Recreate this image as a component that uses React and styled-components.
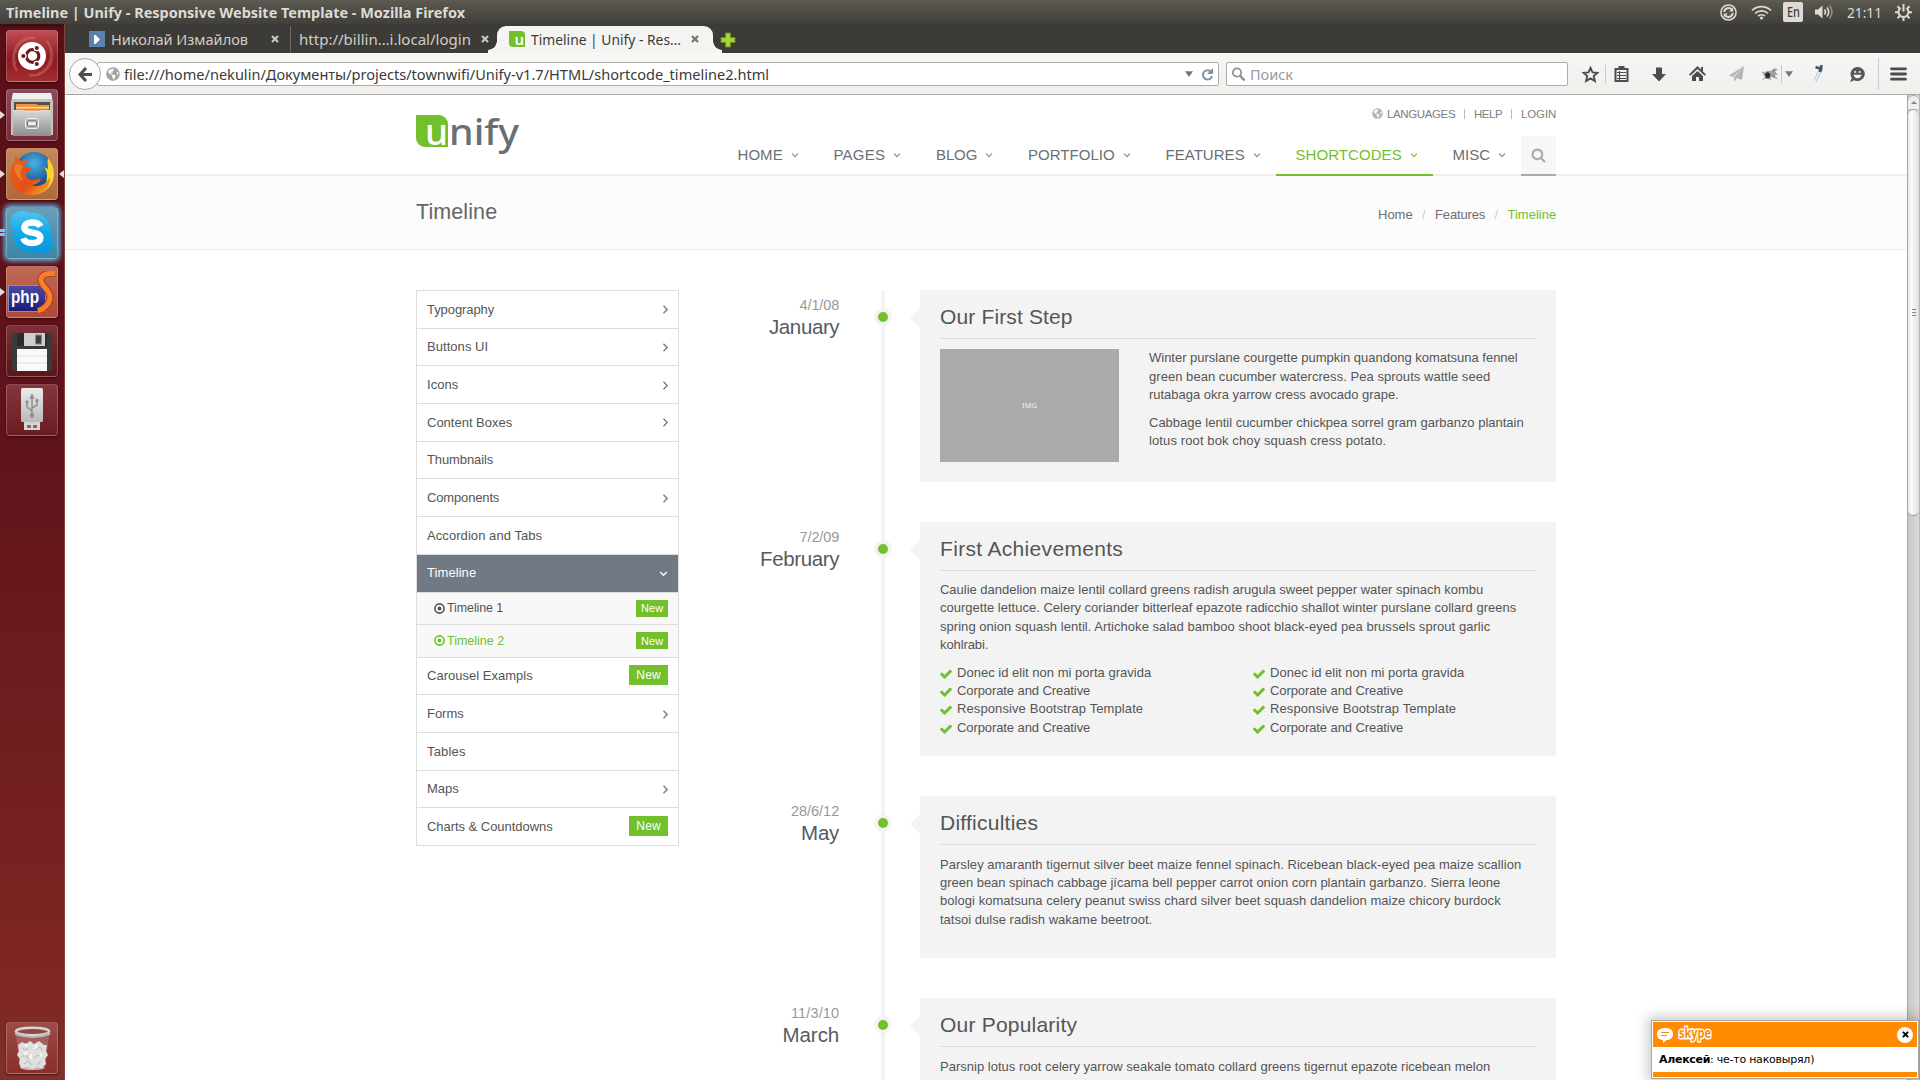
import React, { useLayoutEffect, useRef, useState } from "react";
import styled, { createGlobalStyle, css } from "styled-components";
import { FaGlobeAmericas } from "react-icons/fa";

const GREEN = "#72c02c";
const UI_FONT = `"Noto Sans", "Open Sans", sans-serif`;
const PAGE_FONT = `"Liberation Sans", Arial, sans-serif`;

const Global = createGlobalStyle`
  * { box-sizing: border-box; }
  html, body { margin: 0; padding: 0; overflow: hidden; background: #fff; }
  svg { display: block; flex: none; }
`;

/* ---------- text fitted to a measure ---------- */

const FitBox = styled.span`
  display: inline-block;
  white-space: pre;
  flex: none;
  text-align: left;
`;
const FitInner = styled.span`
  display: inline-block;
  transform-origin: 0 50%;
`;

function Fit({ w, squeeze, children }) {
  const ref = useRef(null);
  const [style, setStyle] = useState({});
  useLayoutEffect(() => {
    const natural = ref.current.getBoundingClientRect().width;
    if (squeeze) setStyle({ transform: `scaleX(${w / natural})` });
    else setStyle({ letterSpacing: `${(w + 0.2 - natural) / String(children).length}px` });
  }, []);
  return (
    <FitBox style={{ width: w }}>
      <FitInner ref={ref} style={style}>{children}</FitInner>
    </FitBox>
  );
}

/* ---------- desktop ---------- */

const Desktop = styled.div`
  width: 1920px;
  height: 1080px;
  overflow: hidden;
  display: flex;
  flex-direction: column;
  background: #fff;
`;
const SystemBar = styled.header`
  height: 24px;
  flex: none;
  display: flex;
  align-items: center;
  justify-content: space-between;
  padding: 0 8px 0 6px;
  background: linear-gradient(#5f5d50 0, #595750 2px, #403f3a 100%);
  color: #dfdbd2;
  font: 14.5px/22px ${UI_FONT};
`;
const WindowTitle = styled.div`
  font-weight: 700;
  display: flex;
`;
const Tray = styled.div`
  display: flex;
  align-items: center;
`;
const TrayCell = styled.div`
  width: ${(p) => p.$w}px;
  display: flex;
  justify-content: center;
`;
const Clock = styled(TrayCell)`
  margin-right: 7px;
`;
const Lang = styled.div`
  width: 20px;
  height: 20px;
  border-radius: 2px;
  background: #dfdbd2;
  color: #3c3b37;
  font-size: 14px;
  font-weight: 500;
  line-height: 20px;
  display: flex;
  justify-content: center;
`;
const Workspace = styled.div`
  flex: 1;
  min-height: 0;
  display: flex;
`;

/* ---------- launcher ---------- */

const Launcher = styled.nav`
  width: 65px;
  flex: none;
  display: flex;
  flex-direction: column;
  gap: 7px;
  padding: 6px 6px 6px;
  border-right: 1px solid #83403f;
  background: linear-gradient(#3c0a0e 0, #5a0f16 5px, #60131a 40%, #7f2723 92%, #80302a 100%);
`;
const Tile = styled.div`
  width: 52px;
  height: 52px;
  flex: none;
  border-radius: 4px;
  display: flex;
  align-items: center;
  justify-content: center;
  position: relative;
  border: 1px solid rgba(255, 255, 255, 0.22);
  background: ${(p) => p.$bg};
  box-shadow: ${(p) => (p.$glow ? "0 0 5px 2px #58b9e8" : "0 1px 2px rgba(0,0,0,.5)")};
  margin-top: ${(p) => (p.$last ? "auto" : 0)};
`;
const Pip = styled.i`
  position: absolute;
  top: 21px;
  left: ${(p) => (p.$right ? "auto" : "-7px")};
  right: ${(p) => (p.$right ? "-7px" : "auto")};
  border: 4px solid transparent;
  border-left: ${(p) => (p.$right ? 0 : "5px solid #e0dcdc")};
  border-right: ${(p) => (p.$right ? "5px solid #e0dcdc" : 0)};
`;
const PipBars = styled.i`
  position: absolute;
  top: 21px;
  left: -7px;
  width: 5px;
  height: 7px;
  border-top: 3px solid #7cc7ee;
  border-bottom: 3px solid #7cc7ee;
`;

const UbuntuIcon = () => (
  <svg width="50" height="50" viewBox="0 0 50 50">
    <path d="M8 34C3 17 16 5 28 7M44 18C49 34 36 46 22 44M10 40C2 28 8 10 20 8M40 10C48 20 44 40 31 43" fill="none" stroke="#e08f8f" strokeWidth="2.500" opacity=".35" />
    <circle cx="25" cy="25" r="14" fill="#fff" />
    <circle cx="25.500" cy="25" r="6.300" fill="none" stroke="#6e1a1e" strokeWidth="3.200" />
    <g stroke="#fff" strokeWidth="1.200" fill="#6e1a1e">
      <circle cx="16.400" cy="25" r="2.700" />
      <circle cx="29.800" cy="17" r="2.700" />
      <circle cx="29.800" cy="33" r="2.700" />
    </g>
  </svg>
);
const FilesIcon = () => (
  <svg width="50" height="50" viewBox="0 0 50 50">
    <defs>
      <linearGradient id="fg" x1="0" y1="0" x2="0" y2="1"><stop offset="0" stopColor="#d8d8d6" /><stop offset="1" stopColor="#8e8e8c" /></linearGradient>
    </defs>
    <path d="M6 3h38l2 8v34H4V11z" fill="#c4c4c2" />
    <path d="M6 3h38l1 6H5z" fill="#f0f0ee" />
    <rect x="7" y="12" width="36" height="12" fill="#55504c" />
    <path d="M9 14h20l2 1h11v9H9z" fill="#f29438" />
    <rect x="9" y="17" width="33" height="7" fill="#f8d9b0" />
    <rect x="9" y="18.500" width="33" height="2" fill="#ef8426" />
    <path d="M6 20h10l2 2h14l2-2h10v26H6z" fill="url(#fg)" />
    <rect x="18.500" y="28.500" width="13" height="10" rx="2" fill="#b9b9b7" stroke="#eee" />
    <rect x="20.500" y="31" width="9" height="5" rx="1" fill="#eee" stroke="#666" />
  </svg>
);
const FirefoxIcon = () => (
  <svg width="50" height="50" viewBox="0 0 50 50">
    <defs>
      <radialGradient id="ffb" cx=".5" cy=".3" r=".7"><stop offset="0" stopColor="#45b5ea" /><stop offset="1" stopColor="#17316f" /></radialGradient>
      <linearGradient id="ffo" x1="0" y1="0" x2="1" y2="1"><stop offset="0" stopColor="#e8641b" /><stop offset=".6" stopColor="#e2501b" /><stop offset="1" stopColor="#f9b52c" /></linearGradient>
    </defs>
    <circle cx="27" cy="22" r="19" fill="url(#ffb)" />
    <path d="M41 9c7 8 8 20 2 28-5 7-13 9-20 8 12-1 17-8 17-18 0-6-3-9-3-9l4 2c0-4-1-8 0-11z" fill="#fbd334" />
    <path d="M8 7c2 1 4 3 6 5 3-1 6-1 8 0-3 2-4 4-5 6 4 0 7 0 8 1-1 3-4 4-6 6 0 3 3 6 7 6 3 0 5-2 8-1-2 4-6 6-10 6 9 3 16-2 19-8 1 9-5 17-17 18C13 47 3 38 3 26 3 19 6 14 8 13z" fill="url(#ffo)" />
    <path d="M8 16c3-2 6-1 8 2-4 4-3 11 1 14-6-1-10-8-9-16z" fill="#f58a2a" opacity=".7" />
  </svg>
);
const SkypeIcon = () => (
  <svg width="50" height="50" viewBox="0 0 50 50">
    <defs><linearGradient id="sk" x1="0" y1="0" x2="0" y2="1"><stop offset="0" stopColor="#4cc5f3" /><stop offset=".5" stopColor="#10aae9" /><stop offset="1" stopColor="#0b94d6" /></linearGradient></defs>
    <path d="M15 3c3 0 5 1 7 2 14-2 24 9 22 23 3 5 3 11-1 15-5 4-10 4-14 1C15 47 4 37 6 22 0 12 6 3 15 3z" fill="url(#sk)" />
    <path d="M33.500 18.500c-1.500-3-4.500-4-8.500-4-4.200 0-7.600 1.900-7.600 5 0 7.200 16 3 16 10.300 0 3.500-3.800 5.200-8.400 5.200-4.400 0-7.700-1.600-8.800-4.800" fill="none" stroke="#fff" strokeWidth="6.400" />
  </svg>
);
const PhpTile = styled.div`
  width: 50px;
  height: 50px;
  display: flex;
  align-items: flex-end;
  position: relative;
`;
const PhpPlate = styled.div`
  width: 38px;
  height: 27px;
  margin: 0 0 5px 1px;
  background: linear-gradient(#4b4aa8, #1d1c72);
  border: 1px solid #8b8ac4;
  color: #fff;
  display: flex;
  padding-left: 2px;
  font: 700 19px/22px "Liberation Sans", sans-serif;
`;
const SwooshSvg = styled.svg`
  position: absolute;
  left: 28px;
  top: 4px;
`;
const PhpIcon = () => (
  <PhpTile>
    <PhpPlate><Fit squeeze w={28}>php</Fit></PhpPlate>
    <SwooshSvg width="21" height="42" viewBox="0 0 21 42">
      <path d="M20 2.500C13 2 7 3 6 8c-1 7 9 10 9 18 0 7-6 12-12 14" fill="none" stroke="#b8331c" strokeWidth="7" />
      <path d="M20 2.500C13 2 7 3 6 8c-1 7 9 10 9 18 0 7-6 12-12 14" fill="none" stroke="#f5812a" strokeWidth="5" />
    </SwooshSvg>
  </PhpTile>
);
const FloppyIcon = () => (
  <svg width="50" height="50" viewBox="0 0 50 50">
    <path d="M6 7h38l1 1v36l-1 1H6l-1-1V8z" fill="#3a3a3c" />
    <path d="M10 7h30v13H10z" fill="#2c2c2e" />
    <path d="M17 7h21v13H17z" fill="#cfcfd1" />
    <rect x="28.500" y="9" width="6" height="9" fill="#3e3e42" stroke="#8b8b90" />
    <rect x="10" y="23" width="30" height="22" fill="#fafafa" />
    <path d="M10 30h30M10 37h30" stroke="#ddd" />
  </svg>
);
const UsbIcon = () => (
  <svg width="50" height="50" viewBox="0 0 50 50">
    <defs><linearGradient id="us" x1="0" y1="0" x2="0" y2="1"><stop offset="0" stopColor="#ececec" /><stop offset="1" stopColor="#b9b9b9" /></linearGradient></defs>
    <rect x="17" y="36" width="16" height="9" fill="#d8d4d4" />
    <path d="M20 40h4v3h-4zM26 40h4v3h-4z" fill="#776c6c" />
    <rect x="14" y="3" width="22" height="34" rx="1.500" fill="url(#us)" />
    <g stroke="#8f8f8f" strokeWidth="1.500" fill="none">
      <path d="M25 11v19M25 26l-5-4v-4M25 23l5-3v-4" />
      <circle cx="25" cy="30.500" r="1.500" fill="#8f8f8f" /><circle cx="20" cy="17" r="1" /><circle cx="30" cy="15.500" r="1" /><path d="M23.500 13l1.500-3 1.500 3z" />
    </g>
  </svg>
);
const TrashIcon = () => (
  <svg width="50" height="50" viewBox="0 0 50 50">
    <path d="M9 12h33l-4 33q-13 4-25 0z" fill="#c98d8a" opacity=".4" />
    <ellipse cx="25.500" cy="45" rx="12" ry="2" fill="#ddd" opacity=".7" />
    <path d="M11 22l4-3 4 2 4-3 4 3 5-3 5 4 3 0-1 6 2 4-3 4 1 5-4 4-5-1-5 2-5-2-6 1-2-5 1-4-3-4 2-4z" fill="#dfe1de" />
    <path d="M15 25l4 2 3-3M28 27l5-3 3 4M14 34l4-2 4 4M27 34l5-2 5 3M17 41l4-3 4 4M30 42l4-4" fill="none" stroke="#c0c3bf" strokeWidth="1.300" />
    <path d="M18 21l3 3M30 22l-2 4M24 31v5M33 30l2 4M20 29l-3 3" stroke="#f8f8f8" strokeWidth="2.400" />
    <ellipse cx="25.500" cy="8.500" rx="16.500" ry="3.800" fill="#924844" stroke="#d5d7d5" strokeWidth="2.500" />
    <path d="M8 9q17 8 35 0v3q-17 6-35 0z" fill="#b9bcb9" />
  </svg>
);

/* ---------- browser chrome ---------- */

const Browser = styled.div`
  flex: 1;
  min-width: 0;
  display: flex;
  flex-direction: column;
`;
const TabStrip = styled.div`
  height: 29px;
  flex: none;
  display: flex;
  align-items: flex-end;
  padding-left: 24px;
  background: #3c3b37;
  color: #d2cec5;
  font: 15px/26px ${UI_FONT};
`;
const Tab = styled.div`
  height: 27px;
  width: ${(p) => p.$w}px;
  flex: none;
  display: flex;
  align-items: center;
  gap: 6px;
  padding: 0 0 1px ${(p) => p.$pl}px;
  border-right: ${(p) => (p.$sep ? "1px solid #6b6963" : "0")};
  position: relative;
  ${(p) => p.$active && css`
    color: #3c3b37;
    background: #f4f4f2;
    border-radius: 9px 9px 0 0;
    &::before, &::after {
      content: "";
      position: absolute;
      bottom: 0;
      width: 9px;
      height: 12px;
    }
    &::before { left: -9px; background: radial-gradient(circle at 0 0, transparent 8.5px, #f4f4f2 9px); }
    &::after { right: -9px; background: radial-gradient(circle at 100% 0, transparent 8.5px, #f4f4f2 9px); }
  `}
`;
const CloseGlyph = styled.span`
  margin-left: ${(p) => p.$ml || 0}px;
`;
const Favicon = styled.div`
  width: 16px;
  height: 16px;
  flex: none;
  display: flex;
  align-items: center;
  justify-content: ${(p) => (p.$leaf ? "flex-end" : "center")};
  background: ${(p) => p.$bg};
  border-radius: ${(p) => (p.$leaf ? "0 4px 0 4px" : 0)};
  color: #fff;
  font: 600 15px/16px ${UI_FONT};
  padding-right: ${(p) => (p.$leaf ? 1 : 0)}px;
`;
const NewTab = styled.div`
  margin: 0 0 5px 7px;
  position: relative;
`;
const Toolbar = styled.div`
  height: 42px;
  flex: none;
  display: flex;
  align-items: center;
  padding: 0 13px 0 4px;
  border-top: 1px solid #fbfbfa;
  border-bottom: 1px solid #a9a7a1;
  background: linear-gradient(#f6f6f5, #f0efed);
  font: 15px/22px ${UI_FONT};
  color: #3a3a3a;
`;
const BackButton = styled.div`
  width: 32px;
  height: 32px;
  border-radius: 50%;
  border: 1px solid #a4a8ae;
  background: #fbfbfa;
  display: flex;
  align-items: center;
  justify-content: center;
  z-index: 1;
  flex: none;
`;
const Field = styled.div`
  height: 24px;
  width: ${(p) => p.$w}px;
  flex: none;
  display: flex;
  align-items: center;
  gap: 4px;
  background: #fff;
  border: 1px solid #adaca7;
  border-radius: 2px;
  padding: 0 4px 0 ${(p) => p.$pl}px;
  margin-left: ${(p) => p.$ml}px;
  color: ${(p) => p.$color || "#3a3a3a"};
`;
const Spacer = styled.span`
  flex: 1;
`;
const ToolSlot = styled.div`
  width: ${(p) => p.$w}px;
  display: flex;
  justify-content: center;
  flex: none;
`;
const ToolLine = styled.div`
  width: 1px;
  height: ${(p) => p.$h}px;
  background: #c3cbd4;
  flex: none;
`;

const CloseX = ({ c = "#c9c6be", s = 8 }) => (
  <svg width={s} height={s} viewBox="0 0 8 8"><path d="M1 1l6 6M7 1L1 7" stroke={c} strokeWidth="2.300" /></svg>
);
const Tri = () => <svg width="8" height="6" viewBox="0 0 8 6"><path d="M0 .3h8L4 6z" fill="#777" /></svg>;

/* ---------- web page ---------- */

const View = styled.div`
  flex: 1;
  min-height: 0;
  display: flex;
`;
const Page = styled.main`
  flex: 1;
  min-width: 0;
  overflow: hidden;
  background: #fff;
  font: 13px/18.2px ${PAGE_FONT};
  color: #555;
`;
const Container = styled.div`
  width: 1140px;
  margin-left: 351px;
  display: flex;
`;
const SiteHeader = styled.header`
  height: 81px;
  border-bottom: 2px solid #eee;
`;
const HeaderInner = styled(Container)`
  height: 81px;
  justify-content: space-between;
`;
const Logo = styled.div`
  display: flex;
  margin-top: 20px;
  height: 32px;
  font: 37px/32px ${UI_FONT};
  color: #687074;
`;
const LogoLeaf = styled.div`
  width: 32px;
  height: 32px;
  margin-right: 1px;
  padding-left: 9px;
  background: ${GREEN};
  border-radius: 0 9px 0 9px;
  color: #fff;
  font-weight: 500;
  line-height: 32px;
`;
const LogoWord = styled.div`
  line-height: 32px;
  font-weight: 500;
`;
const HeaderRight = styled.div`
  display: flex;
  flex-direction: column;
  align-items: flex-end;
`;
const TopLinks = styled.div`
  height: 41px;
  padding-top: 9px;
  display: flex;
  align-items: flex-start;
  font-size: 11.5px;
  line-height: 20px;
  color: #7c8082;
  svg { margin: 4px 4px 0 0; }
`;
const TopSep = styled.i`
  width: 1px;
  height: 10px;
  margin: 5px 9px 0;
  background: #bbb;
`;
const MainNav = styled.nav`
  height: 40px;
  display: flex;
`;
const NavItem = styled.div`
  height: 40px;
  padding: 0 15px 0 20px;
  display: flex;
  align-items: center;
  gap: 8px;
  font-size: 15px;
  line-height: 36px;
  color: ${(p) => (p.$active ? GREEN : "#687074")};
  border-bottom: 2px solid ${(p) => (p.$active ? GREEN : "#eee")};
`;
const SearchBox = styled.div`
  width: 35px;
  background: #f7f7f7;
  border-bottom: 2px solid #aaa;
  display: flex;
  align-items: center;
  justify-content: center;
`;
const Crumbs = styled.section`
  height: 74px;
  border-bottom: 1px solid #eee;
  background: repeating-linear-gradient(135deg, #fdfdfd 0 2px, #fafafa 2px 4px);
`;
const CrumbsInner = styled(Container)`
  justify-content: space-between;
`;
const PageTitle = styled.h1`
  margin: 21px 0 0;
  font-size: 21.5px;
  font-weight: 400;
  line-height: 31px;
  color: #666;
`;
const CrumbList = styled.div`
  display: flex;
  margin-top: 29px;
  line-height: 20px;
  color: #6e6e6e;
`;
const Slash = styled.span`
  width: 22.5px;
  text-align: center;
  color: #ccc;
`;
const Current = styled.span`
  color: ${GREEN};
`;
const Body = styled(Container)`
  padding-top: 40px;
  align-items: flex-start;
`;

const SideMenu = styled.aside`
  width: 263px;
  flex: none;
  border: 1px solid #ddd;
  border-bottom: 0;
`;
const SideRow = styled.div`
  height: ${(p) => (p.$sub ? 32.5 : 37.7)}px;
  border-bottom: 1px solid #ddd;
  padding: ${(p) => (p.$sub || p.$on ? 0 : 1)}px 10px 0 ${(p) => (p.$sub ? 17 : 10)}px;
  display: flex;
  align-items: center;
  gap: 2px;
  font-size: ${(p) => (p.$sub ? 12.5 : 13)}px;
  color: ${(p) => (p.$on ? "#fff" : p.$link ? GREEN : "#555")};
  background: ${(p) => (p.$on ? "#717984" : p.$sub ? "#f8f8f8" : "#fff")};
`;
const Badge = styled.span`
  width: ${(p) => (p.$small ? 32 : 39)}px;
  height: ${(p) => (p.$small ? 17 : 20)}px;
  margin-bottom: ${(p) => (p.$small ? 0 : 2)}px;
  display: flex;
  align-items: center;
  justify-content: center;
  background: ${GREEN};
  color: #fff;
  font-size: ${(p) => (p.$small ? 11 : 12)}px;
  line-height: 16px;
`;
const RowArrow = styled.span`
  margin-right: -1px;
`;

const Timeline = styled.section`
  flex: 1;
  display: flex;
  flex-direction: column;
`;
const Entry = styled.article`
  display: grid;
  grid-template-columns: 161px 80px 636px;
`;
const When = styled.div`
  display: flex;
  flex-direction: column;
  align-items: flex-end;
  padding: 5px 1px 0 0;
`;
const Day = styled.div`
  font-size: 14.5px;
  line-height: 20px;
  color: #999;
`;
const Month = styled.div`
  font-size: 20.5px;
  line-height: 24px;
  color: #555b66;
`;
const Rail = styled.div`
  display: flex;
  justify-content: center;
  background: linear-gradient(#f3f3f3, #f3f3f3) 41px 0 / 4px 100% no-repeat;
`;
const Dot = styled.i`
  width: 18px;
  height: 18px;
  margin: 18px 0 0 6px;
  border: 4px solid #f3f3f3;
  border-radius: 50%;
  background: ${GREEN};
`;
const Card = styled.div`
  position: relative;
  height: ${(p) => p.$h}px;
  margin-bottom: 40px;
  padding: 0 20px;
  background: #f3f3f3;
  &::before {
    content: "";
    position: absolute;
    left: -10px;
    top: 18px;
    border: 10px solid transparent;
    border-left: 0;
    border-right-color: #f3f3f3;
  }
`;
const CardTitle = styled.h2`
  margin: 0 0 10px;
  height: 49px;
  padding-top: 11px;
  border-bottom: 1px solid #ddd;
  font-size: 21px;
  font-weight: 400;
  line-height: 31px;
  color: #555;
`;
const Para = styled.p`
  margin: 0 0 10px;
  padding-top: ${(p) => p.$nudge || 0}px;
  display: flex;
  flex-direction: column;
  line-height: 18.2px;
`;
const Media = styled.div`
  display: flex;
  gap: 30px;
`;
const Placeholder = styled.div`
  width: 179px;
  height: 113px;
  background: #aaa;
  color: #f0f0f0;
  font: 7.5px/112px ${UI_FONT};
  text-align: center;
`;
const Checks = styled.div`
  display: grid;
  grid-template-columns: 313px 1fr;
`;
const CheckItem = styled.div`
  height: 18.2px;
  display: flex;
  align-items: center;
  gap: 5px;
  svg { margin-top: 2px; }
`;

const ScrollTrack = styled.div`
  width: 13px;
  flex: none;
  display: flex;
  flex-direction: column;
  border-left: 1px solid #a9a7a3;
  border-right: 1px solid #b9b7b3;
  background: linear-gradient(90deg, #c9c7c4, #dddbd9);
`;
const ScrollUp = styled.div`
  height: 14px;
  border-radius: 6px 6px 0 0;
  border-top: 1px solid #aaa8a4;
  background: #efeeec;
  display: flex;
  align-items: center;
  justify-content: center;
`;
const ScrollThumb = styled.div`
  height: 407px;
  border-radius: 6px;
  border: 1px solid #9d9b97;
  border-width: 1px 0;
  background: linear-gradient(90deg, #e9e8e5, #fbfbfa 30%, #e0dfdc);
  display: flex;
  align-items: center;
  justify-content: center;
`;

/* ---------- skype notification ---------- */

const Toast = styled.div`
  position: absolute;
  left: 1651px;
  top: 1020px;
  width: 268px;
  height: 59px;
  border: 1px solid #aaa6a2;
  padding: 1px;
  background: #fff;
  display: flex;
  flex-direction: column;
  box-shadow: 0 0 12px 3px rgba(0, 0, 0, 0.22);
  font: 11px/25px "DejaVu Sans", sans-serif;
  color: #000;
`;
const ToastHead = styled.div`
  height: 25px;
  flex: none;
  background: #ff8c00;
  padding: 0 4px;
  display: flex;
  align-items: center;
  gap: 4px;
`;
const ToastText = styled.div`
  height: 25px;
  flex: none;
  padding-left: 6px;
  display: flex;
`;
const ToastFoot = styled.div`
  height: 5px;
  background: #ff8c00;
`;
const SkypeWord = styled.span`
  font: 700 14px/20px "Open Sans", sans-serif;
  margin: -4px 0 0 2px;
  color: #ff8c00;
  -webkit-text-stroke: 3px #fff;
  paint-order: stroke fill;
`;
const ToastClose = styled.div`
  width: 16px;
  height: 16px;
  border-radius: 50%;
  background: #fff;
  display: flex;
  align-items: center;
  justify-content: center;
`;

const Angle = ({ down, c = "#777", s = 9 }) => (
  <svg width={s} height={s} viewBox="0 0 9 9">
    <path d={down ? "M1.200 3l3.300 3.300L7.800 3" : "M3.500 .8l3.700 3.700L3.500 8.200"} fill="none" stroke={c} strokeWidth="1.300" />
  </svg>
);
const Target = ({ c }) => (
  <svg width="11" height="11" viewBox="0 0 11 11">
    <circle cx="5.500" cy="5.500" r="4.600" fill="none" stroke={c} strokeWidth="1.600" />
    <circle cx="5.500" cy="5.500" r="1.900" fill={c} />
  </svg>
);
const Check = () => (
  <svg width="12" height="10" viewBox="121 250 1550 1290">
    <path d="M1671 566q0 40-28 68l-724 724-136 136q-28 28-68 28t-68-28l-136-136-362-362q-28-28-28-68t28-68l136-136q28-28 68-28t68 28l294 295 656-657q28-28 68-28t68 28l136 136q28 28 28 68z" fill={GREEN} />
  </svg>
);
const SearchGlyph = () => (
  <svg width="15" height="15" viewBox="0 64 1792 1792">
    <path d="M1216 832q0-185-131.500-316.500T768 384 451.500 515.500 320 832t131.500 316.500T768 1280t316.500-131.500T1216 832zm512 832q0 52-38 90t-90 38q-54 0-90-38l-343-342q-179 124-399 124-143 0-273.500-55.500t-225-150-150-225T64 832t55.500-273.500 150-225 225-150T768 128t273.500 55.500 225 150 150 225T1472 832q0 220-124 399l343 343q37 37 37 90z" fill="#aaa" />
  </svg>
);

const NAV = [["HOME", 45], ["PAGES", 51.5], ["BLOG", 41], ["PORTFOLIO", 86.5], ["FEATURES", 79], ["SHORTCODES", 106, true], ["MISC", 37.5]];
const MENU = [
  { t: "Typography", w: 67, arrow: true },
  { t: "Buttons UI", w: 61, arrow: true },
  { t: "Icons", w: 31, arrow: true },
  { t: "Content Boxes", w: 85, arrow: true },
  { t: "Thumbnails", w: 66 },
  { t: "Components", w: 72, arrow: true },
  { t: "Accordion and Tabs", w: 115 },
  { t: "Timeline", w: 49, on: true },
  { t: "Timeline 1", w: 56, sub: true },
  { t: "Timeline 2", w: 57, sub: true, link: true },
  { t: "Carousel Exampls", w: 105.5, badge: true },
  { t: "Forms", w: 36.5, arrow: true },
  { t: "Tables", w: 38.5 },
  { t: "Maps", w: 31.5, arrow: true },
  { t: "Charts & Countdowns", w: 125.5, badge: true },
];
const CHECKS = [["Donec id elit non mi porta gravida", 194], ["Corporate and Creative", 133], ["Responsive Bootstrap Template", 186], ["Corporate and Creative", 133]];

const Lines = ({ rows, nudge }) => <Para $nudge={nudge}>{rows.map(([t, w]) => <Fit key={t} w={w}>{t}</Fit>)}</Para>;

const Event = ({ day, dw, month, mw, title, tw, h, children }) => (
  <Entry>
    <When>
      <Day><Fit w={dw}>{day}</Fit></Day>
      <Month><Fit w={mw}>{month}</Fit></Month>
    </When>
    <Rail><Dot /></Rail>
    <Card $h={h}>
      <CardTitle><Fit w={tw}>{title}</Fit></CardTitle>
      {children}
    </Card>
  </Entry>
);

const INK = "#4d4d4d";
const ToolIcons = () => (
  <>
    <ToolSlot $w={7} />
    <ToolSlot $w={30}><svg width="17" height="17" viewBox="0 0 17 17"><path d="M8.500 1.800l2 4.600 5 .4-3.800 3.300 1.200 4.900-4.400-2.600L4.100 15l1.200-4.900L1.500 6.800l5-.4z" fill="none" stroke={INK} strokeWidth="1.900" /></svg></ToolSlot>
    <ToolLine $h={18} />
    <ToolSlot $w={30}><svg width="15" height="16" viewBox="0 0 15 16"><path d="M1.500 3h12v12h-12z" fill="none" stroke={INK} strokeWidth="2" /><path d="M4.500 0h6v4h-6z" fill={INK} /><path d="M3 6.500h9M3 9.500h9M3 12.500h9M5.500 5v9" stroke={INK} strokeWidth="1.100" /></svg></ToolSlot>
    <ToolSlot $w={46}><svg width="14" height="15" viewBox="0 0 14 15"><path d="M4 .5h6V7h4l-7 7.500L0 7h4z" fill={INK} /></svg></ToolSlot>
    <ToolSlot $w={30}><svg width="17" height="16" viewBox="0 0 17 16"><path d="M8.500 0L17 8.500l-1.300 1.200L8.500 3 1.300 9.700 0 8.500z" fill={INK} /><path d="M8.500 5l5.500 5v5h-4v-4H7v4H3v-5z" fill={INK} /><path d="M12 1h2v4h-2z" fill={INK} /></svg></ToolSlot>
    <ToolSlot $w={48}><svg width="15" height="16" viewBox="0 0 15 16"><path d="M15 0L0 9.500l4 1.500zM15 0L5 11.500V16l2.500-3.200zM15 0L8 12l5 2z" fill="#b4b4b4" /></svg></ToolSlot>
    <ToolSlot $w={21}><svg width="17" height="14" viewBox="0 0 18 14"><path d="M1 8c2-4 5-5 8-4l4-3 4 1-4 3 4 2-4 2 1 3-4-2-3 3-3-3z" fill="#a2a2a2" /><path d="M3 7l3-2 3 2-1 4-4 1z" fill="#2d2d2d" /><path d="M0 5l4 2M1 13l3-3M9 13l-1-3M11 8l5 4M12 2l2 4" stroke="#777" /></svg></ToolSlot>
    <ToolLine $h={18} />
    <ToolSlot $w={14}><Tri /></ToolSlot>
    <ToolSlot $w={43}><svg width="12" height="18" viewBox="0 0 12 18"><path d="M8.500 5L3 16" stroke="#a9c6de" strokeWidth="3.200" /><path d="M8 6L3 16" stroke="#f3f8fc" strokeWidth="1.400" /><path d="M3.500 2l7 2.500M9.500 0L8 7" stroke="#4a5560" strokeWidth="2.800" fill="none" /></svg></ToolSlot>
    <ToolSlot $w={36}><svg width="15" height="15" viewBox="0 0 15 15"><path d="M7.500 0a7 7 0 1 1-3 13.200L0 15l1.800-4A7 7 0 0 1 7.500 0z" fill="#575757" /><circle cx="5.200" cy="5" r="1.100" fill="#f2f2f0" /><circle cx="9.800" cy="5" r="1.100" fill="#f2f2f0" /><path d="M3.500 7.800h8q-.8 3.400-4 3.400t-4-3.400z" fill="#f2f2f0" /></svg></ToolSlot>
    <ToolSlot $w={3} />
    <ToolLine $h={32} />
    <Spacer />
    <svg width="17" height="14" viewBox="0 0 17 14"><path d="M1.500 1.800h14M1.500 7h14M1.500 12.200h14" stroke={INK} strokeWidth="2.800" strokeLinecap="round" /></svg>
  </>
);

export default function App() {
  return (
    <Desktop>
      <Global />
      <SystemBar>
        <WindowTitle><Fit squeeze w={459}>Timeline | Unify - Responsive Website Template - Mozilla Firefox</Fit></WindowTitle>
        <Tray>
          <TrayCell $w={33}>
            <svg width="17" height="17" viewBox="0 0 17 17"><circle cx="8.500" cy="8.500" r="7.600" fill="#55534c" stroke="#dfdbd2" strokeWidth="1.500" /><path d="M4.200 8a4.300 4.300 0 0 1 7.600-2.300M12.800 9a4.300 4.300 0 0 1-7.600 2.300" fill="none" stroke="#dfdbd2" strokeWidth="2" /><path d="M13.200 3.500v4h-4zM3.800 13.500v-4h4z" fill="#dfdbd2" /></svg>
          </TrayCell>
          <TrayCell $w={32}>
            <svg width="21" height="15" viewBox="0 0 21 15"><path d="M1 5.500a13.500 13.500 0 0 1 19 0M4 8.500a9.200 9.200 0 0 1 13 0M7 11.200a5 5 0 0 1 7 0" fill="none" stroke="#dfdbd2" strokeWidth="1.700" /><circle cx="10.500" cy="13" r="1.600" fill="#dfdbd2" /></svg>
          </TrayCell>
          <TrayCell $w={32}><Lang><Fit squeeze w={13}>En</Fit></Lang></TrayCell>
          <TrayCell $w={32}>
            <svg width="20" height="16" viewBox="0 0 20 16"><path d="M0 5.500h3l4.500-4v13L3 10.500H0z" fill="#dfdbd2" /><path d="M9.500 5.500q2 2.500 0 5M12 3.500q3.500 4.500 0 9" fill="none" stroke="#dfdbd2" strokeWidth="1.600" /><path d="M14.500 1.500q5 6.500 0 13" fill="none" stroke="#8f8c84" strokeWidth="1.600" /></svg>
          </TrayCell>
          <Clock $w={47}><Fit squeeze w={35}>21:11</Fit></Clock>
          <svg width="17" height="18" viewBox="0 0 17 18"><path d="M5.600 5A5 5 0 1 0 11.400 5" fill="none" stroke="#dfdbd2" strokeWidth="2" /><path d="M8.500 1v7.500" stroke="#dfdbd2" strokeWidth="2" /><path d="M0 9.200h3M14 9.200h3M2.500 3.200l2 2M14.500 3.200l-2 2M2.500 15.200l2-2M14.500 15.200l-2-2M8.500 14.500V18" stroke="#dfdbd2" strokeWidth="2" /></svg>
        </Tray>
      </SystemBar>
      <Workspace>
        <Launcher>
          <Tile $bg="linear-gradient(#c14e55, #8c1a20 55%, #a42d30)"><UbuntuIcon /></Tile>
          <Tile $bg="linear-gradient(#8a4a5a, #7c2837)"><FilesIcon /><Pip /></Tile>
          <Tile $bg="linear-gradient(#c38a5c, #b0683a)"><FirefoxIcon /><Pip /><Pip $right /></Tile>
          <Tile $glow $bg="linear-gradient(#6b9fb8, #3d86a8)"><SkypeIcon /><PipBars /></Tile>
          <Tile $bg="linear-gradient(#bf6a58, #ad4a35)"><PhpIcon /><Pip /></Tile>
          <Tile $bg="linear-gradient(#7d3038, #5b141a)"><FloppyIcon /></Tile>
          <Tile $bg="linear-gradient(#84363c, #6a1c20)"><UsbIcon /></Tile>
          <Tile $last $bg="linear-gradient(#9b4b48, #8a2e2b)"><TrashIcon /></Tile>
        </Launcher>
        <Browser>
          <TabStrip>
            <Tab $w={202} $pl={0} $sep>
              <Favicon $bg="#5b82ae"><svg width="6" height="9" viewBox="0 0 6 9"><path d="M0 0h1.500L6 4.500 1.500 9H0z" fill="#fff" /></svg></Favicon>
              <Fit squeeze w={137}>Николай Измайлов</Fit>
              <CloseGlyph $ml={17}><CloseX /></CloseGlyph>
            </Tab>
            <Tab $w={206} $pl={8}>
              <Fit squeeze w={172}>http://billin…i.local/login</Fit>
              <CloseGlyph $ml={4}><CloseX /></CloseGlyph>
            </Tab>
            <Tab $w={216} $pl={12} $active>
              <Favicon $leaf $bg={GREEN}>u</Favicon>
              <Fit squeeze w={150}>Timeline | Unify - Res…</Fit>
              <CloseGlyph $ml={4}><CloseX c="#77756f" /></CloseGlyph>
            </Tab>
            <NewTab><svg width="16" height="16" viewBox="0 0 16 16"><path d="M5.500 1h5v4.500H15v5h-4.500V15h-5v-4.500H1v-5h4.500z" fill="#a8cf3e" stroke="#6d8f1c" /></svg></NewTab>
          </TabStrip>
          <Toolbar>
            <BackButton><svg width="15" height="15" viewBox="0 0 15 15"><path d="M8 1L2 7.500 8 14M2.500 7.500H14" fill="none" stroke={INK} strokeWidth="3" /></svg></BackButton>
            <Field $w={1122} $ml={-4} $pl={8}>
              <FaGlobeAmericas size={14} color="#a3a3a3" />
              <Fit squeeze w={645}>file:///home/nekulin/Документы/projects/townwifi/Unify-v1.7/HTML/shortcode_timeline2.html</Fit>
              <Spacer />
              <Tri />
              <ToolSlot $w={0} />
              <svg width="13" height="13" viewBox="0 0 13 13"><path d="M10.500 4.500A4.600 4.600 0 1 0 11 8" fill="none" stroke="#7f93a8" strokeWidth="2" /><path d="M12 0v6H6z" fill="#7f93a8" /></svg>
            </Field>
            <Field $w={342} $ml={7} $pl={4} $color="#999">
              <svg width="15" height="15" viewBox="0 0 15 15"><circle cx="6" cy="5.500" r="4.200" fill="none" stroke="#8e8e8e" strokeWidth="1.700" /><path d="M9 8.500l4.500 5" stroke="#8e8e8e" strokeWidth="2.400" /></svg>
              <Fit squeeze w={43}>Поиск</Fit>
            </Field>
            <ToolIcons />
          </Toolbar>
          <View>
            <Page>
              <SiteHeader>
                <HeaderInner>
                  <Logo>
                    <LogoLeaf><Fit squeeze w={23}>u</Fit></LogoLeaf>
                    <LogoWord><Fit squeeze w={70}>nify</Fit></LogoWord>
                  </Logo>
                  <HeaderRight>
                    <TopLinks>
                      <FaGlobeAmericas size={11} color="#b5b5b5" />
                      <Fit w={68}>LANGUAGES</Fit><TopSep /><Fit w={28}>HELP</Fit><TopSep /><Fit w={35}>LOGIN</Fit>
                    </TopLinks>
                    <MainNav>
                      {NAV.map(([t, w, on]) => (
                        <NavItem key={t} $active={on}><Fit w={w}>{t}</Fit><Angle down s={8} c={on ? GREEN : "#888"} /></NavItem>
                      ))}
                      <SearchBox><SearchGlyph /></SearchBox>
                    </MainNav>
                  </HeaderRight>
                </HeaderInner>
              </SiteHeader>
              <Crumbs>
                <CrumbsInner>
                  <PageTitle><Fit w={81}>Timeline</Fit></PageTitle>
                  <CrumbList>
                    <Fit w={34.5}>Home</Fit><Slash>/</Slash><Fit w={50}>Features</Fit><Slash>/</Slash><Current><Fit w={48.5}>Timeline</Fit></Current>
                  </CrumbList>
                </CrumbsInner>
              </Crumbs>
              <Body>
                <SideMenu>
                  {MENU.map((m) => (
                    <SideRow key={m.t} $on={m.on} $sub={m.sub} $link={m.link}>
                      {m.sub && <Target c={m.link ? GREEN : "#555"} />}
                      <Fit w={m.w}>{m.t}</Fit>
                      <Spacer />
                      {m.arrow && <RowArrow><Angle /></RowArrow>}
                      {m.on && <Angle down c="#fff" />}
                      {m.sub && <Badge $small><Fit w={22}>New</Fit></Badge>}
                      {m.badge && <Badge><Fit w={24.5}>New</Fit></Badge>}
                    </SideRow>
                  ))}
                </SideMenu>
                <Timeline>
                  <Event day="4/1/08" dw={39.5} month="January" mw={70} title="Our First Step" tw={132.5} h={192}>
                    <Media>
                      <Placeholder>IMG</Placeholder>
                      <div>
                        <Lines nudge={0.4} rows={[["Winter purslane courgette pumpkin quandong komatsuna fennel", 368.5], ["green bean cucumber watercress. Pea sprouts wattle seed", 341], ["rutabaga okra yarrow cress avocado grape.", 249.5]]} />
                        <Lines rows={[["Cabbage lentil cucumber chickpea sorrel gram garbanzo plantain", 374.5], ["lotus root bok choy squash cress potato.", 237]]} />
                      </div>
                    </Media>
                  </Event>
                  <Event day="7/2/09" dw={39.5} month="February" mw={79} title="First Achievements" tw={183} h={234}>
                    <Lines nudge={0.2} rows={[["Caulie dandelion maize lentil collard greens radish arugula sweet pepper water spinach kombu", 543], ["courgette lettuce. Celery coriander bitterleaf epazote radicchio shallot winter purslane collard greens", 576], ["spring onion squash lentil. Artichoke salad bamboo shoot black-eyed pea brussels sprout garlic", 550], ["kohlrabi.", 48]]} />
                    <Checks>
                      {[0, 1].map((c) => (
                        <div key={c}>
                          {CHECKS.map(([t, w], i) => <CheckItem key={i}><Check /><Fit w={w}>{t}</Fit></CheckItem>)}
                        </div>
                      ))}
                    </Checks>
                  </Event>
                  <Event day="28/6/12" dw={48} month="May" mw={38} title="Difficulties" tw={98} h={162}>
                    <Lines nudge={1} rows={[["Parsley amaranth tigernut silver beet maize fennel spinach. Ricebean black-eyed pea maize scallion", 581], ["green bean spinach cabbage jícama bell pepper carrot onion corn plantain garbanzo. Sierra leone", 560], ["bologi komatsuna celery peanut swiss chard silver beet squash dandelion maize chicory burdock", 560.5], ["tatsoi dulse radish wakame beetroot.", 212]]} />
                  </Event>
                  <Event day="11/3/10" dw={48} month="March" mw={56.5} title="Our Popularity" tw={137} h={180}>
                    <Lines nudge={1} rows={[["Parsnip lotus root celery yarrow seakale tomato collard greens tigernut epazote ricebean melon", 550]]} />
                  </Event>
                </Timeline>
              </Body>
            </Page>
            <ScrollTrack>
              <ScrollUp><svg width="6" height="3" viewBox="0 0 6 3"><path d="M3 0l3 3H0z" fill="#888" /></svg></ScrollUp>
              <ScrollThumb><svg width="4" height="8" viewBox="0 0 4 8"><path d="M0 .5h4M0 3.500h4M0 6.500h4" stroke="#8a8884" /></svg></ScrollThumb>
            </ScrollTrack>
          </View>
        </Browser>
      </Workspace>
      <Toast>
        <ToastHead>
          <svg width="16" height="16" viewBox="0 0 16 16"><path d="M8 1c5 0 8 2 8 6s-3 6-6.500 6L6 16v-3C2 13 0 10.500 0 7s3-6 8-6z" fill="#fff" /><path d="M4 5.500h8M4 8.500h6" stroke="#ff8c00" strokeWidth="1.200" /></svg>
          <SkypeWord><Fit squeeze w={32}>skype</Fit></SkypeWord>
          <Spacer />
          <ToastClose><CloseX c="#000" s={7} /></ToastClose>
        </ToastHead>
        <ToastText><b><Fit w={51}>Алексей</Fit></b><Fit w={104}>: че-то наковырял)</Fit></ToastText>
        <ToastFoot />
      </Toast>
    </Desktop>
  );
}
